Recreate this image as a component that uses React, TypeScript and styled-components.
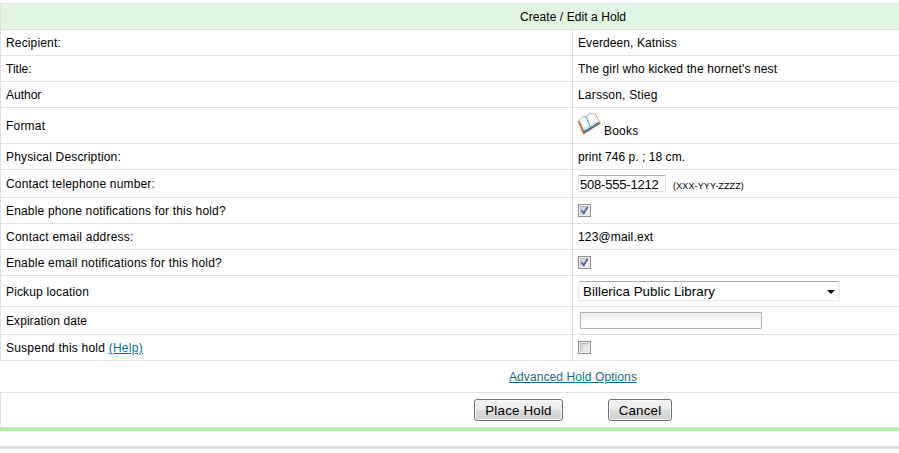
import React from "react";
import styled, { createGlobalStyle } from "styled-components";

const line = "#e0e0e0";

const GlobalStyle = createGlobalStyle`
  *, *::before, *::after { box-sizing: border-box; }
  body {
    margin: 0;
    background: #fff;
    color: #000;
    font: 12px/15px "Liberation Sans", Arial, sans-serif;
    overflow: hidden;
  }
`;

const Page = styled.main`
  width: 899px;
  height: 453px;
  padding-top: 3px;
  overflow: hidden;
`;

const Table = styled.section`
  border: 1px solid ${line};
  border-width: 1px 0 0 1px;
`;

const Title = styled.header`
  height: 26px;
  padding: 6px 0 0 519px;
  background: #e0f6e0;
  border-bottom: 1px solid ${line};
`;

const Row = styled.div<{ $height: number }>`
  display: grid;
  grid-template-columns: 571px 1fr;
  height: ${(p) => p.$height}px;
  border-bottom: 1px solid ${line};
`;

const Label = styled.div`
  display: flex;
  align-items: center;
  padding: 2px 0 0 5px;
  white-space: pre;
`;

const Value = styled.div`
  display: flex;
  align-items: center;
  padding-left: 5px;
  border-left: 1px solid ${line};
  white-space: pre;
`;

const Text = styled.span<{ $spacing?: number }>`
  letter-spacing: ${(p) => p.$spacing ?? 0}px;
`;

const ValueText = styled(Text)`
  padding-top: 2px;
`;

const Link = styled.a<{ $spacing?: number }>`
  color: #0b6ea8;
  letter-spacing: ${(p) => p.$spacing ?? 0}px;
  text-decoration: underline;
  cursor: pointer;
`;

const BookIcon = styled.svg`
  width: 24px;
  height: 24px;
  margin: 0 3px 3px -1px;
`;

const BookName = styled.span`
  padding-top: 11px;
  letter-spacing: 0.2px;
`;

const PhoneInput = styled.input`
  width: 88px;
  height: 17px;
  padding: 1px 1px 0;
  border: 1px solid #e2e6ec;
  border-top-color: #ababab;
  border-radius: 1px;
  background: #fff;
  color: #000;
  font: 13px "Liberation Sans", Arial, sans-serif;
  letter-spacing: -0.2px;
  outline: none;
`;

const Hint = styled.span`
  margin: 4px 0 0 7px;
  font-size: 9px;
  line-height: 12px;
  letter-spacing: 0.13px;
`;

const Check = styled.span`
  display: block;
  width: 13px;
  height: 13px;
  padding: 1px;
  border: 1px solid #8e8f8f;
  background: #f4f4f4;
`;

const CheckFace = styled.span`
  display: block;
  width: 9px;
  height: 9px;
  border: 1px solid #b8bcc2;
  border-right-color: #dfe1e4;
  border-bottom-color: #dfe1e4;
  background: linear-gradient(135deg, #cbcfd5, #f6f6f6);
`;

const Tick = styled.svg`
  display: block;
  width: 9px;
  height: 9px;
  margin: -1px;
  overflow: visible;
`;

const Select = styled.div`
  display: flex;
  align-items: center;
  justify-content: space-between;
  width: 262px;
  height: 20px;
  padding: 1px 4px 0;
  border: 1px solid #e2e6ec;
  border-top-color: #ababab;
  border-radius: 2px;
  font-size: 13.33px;
  letter-spacing: 0.03px;
`;

const Arrow = styled.svg`
  width: 8px;
  height: 4px;
`;

const DateInput = styled.input`
  width: 182px;
  height: 17px;
  margin-left: 2px;
  border: 1px solid #b2b2b2;
  background: linear-gradient(#ededed, #fff 9px);
  outline: none;
`;

const Advanced = styled.div`
  height: 31px;
  padding: 9px 0 0 509px;
`;

const Actions = styled.div`
  display: flex;
  gap: 45px;
  height: 36px;
  padding: 6px 0 0 473px;
  border: 1px solid ${line};
  border-right: 0;
`;

const Button = styled.button<{ $width: number }>`
  width: ${(p) => p.$width}px;
  height: 22px;
  padding: 0;
  border: 1px solid #707070;
  border-radius: 3px;
  background: linear-gradient(#f3f3f3 0%, #ebebeb 49%, #dddddd 50%, #cfcfcf 100%);
  box-shadow: inset 0 0 0 1px #fafafa;
  color: #000;
  font: 13.33px "Liberation Sans", Arial, sans-serif;
  letter-spacing: 0.2px;
`;

const GreenBar = styled.div`
  height: 3px;
  background: #aeeba1;
`;

const GrayBar = styled.div`
  height: 3px;
  margin-top: 15px;
  background: #e0e0e0;
`;

function Checkbox({ checked = false }: { checked?: boolean }) {
  return (
    <Check role="checkbox" aria-checked={checked}>
      <CheckFace>
        {checked && (
          <Tick viewBox="0 0 9 9">
            <path d="M1.5 4.2 3.7 7.2 7.6.9" fill="none" stroke="#4a5f9c" strokeWidth="1.8" />
          </Tick>
        )}
      </CheckFace>
    </Check>
  );
}

function Book() {
  return (
    <BookIcon viewBox="0 0 24 24">
      <path d="M.8 9.5 2.8 8 8 18.5 14 15.5 21.5 9.5 24 11.2 13.5 18 6.5 22.5Z" fill="#d4652c" />
      <path d="m17.5 1.6 1.2.2 4.6 9-1.3.1Z" fill="#d98455" />
      <path d="M6.8 20.2 13.2 16.2 22 11.2" fill="none" stroke="#2f809f" strokeWidth="1.7" />
      <path d="M2.3 8.2Q4.5 3.8 9 4.5L13.2 14.3Q8.6 14.2 7.2 19.2Z" fill="#f2f9fb" />
      <path d="M9 4.5Q11.5 1 17.2 1.4L22.2 10.2Q16.5 10.3 13.2 14.8Z" fill="#fbfdfe" />
      <path d="M2.3 8.2Q4.5 3.8 9 4.5Q11.5 1 17.2 1.4" fill="none" stroke="#8aabb8" strokeWidth=".8" />
      <path d="M7.2 19.2Q8.6 14.2 13.2 14.8Q16.5 10.3 22.2 10.2" fill="none" stroke="#78aebd" strokeWidth=".7" />
      <path d="m9 4.5 4.2 10" stroke="#4390a8" strokeWidth="1" />
    </BookIcon>
  );
}

const rows: { height: number; label: React.ReactNode; value: React.ReactNode }[] = [
  {
    height: 26,
    label: <Text $spacing={0.15}>Recipient:</Text>,
    value: <ValueText $spacing={0.09}>Everdeen, Katniss</ValueText>,
  },
  {
    height: 26,
    label: <Text>Title:</Text>,
    value: <ValueText $spacing={0.13}>The girl who kicked the hornet's nest</ValueText>,
  },
  {
    height: 26,
    label: <Text>Author</Text>,
    value: <ValueText $spacing={0.2}>Larsson, Stieg</ValueText>,
  },
  {
    height: 36,
    label: <Text $spacing={0.2}>Format</Text>,
    value: <><Book /><BookName>Books</BookName></>,
  },
  {
    height: 26,
    label: <Text $spacing={0.17}>Physical Description:</Text>,
    value: <ValueText $spacing={0.05}>print 746 p. ; 18 cm.</ValueText>,
  },
  {
    height: 28,
    label: <Text $spacing={0.17}>Contact telephone number:</Text>,
    value: <><PhoneInput defaultValue="508-555-1212" /><Hint>(XXX-YYY-ZZZZ)</Hint></>,
  },
  {
    height: 26,
    label: <Text $spacing={0.17}>Enable phone notifications for this hold?</Text>,
    value: <Checkbox checked />,
  },
  {
    height: 26,
    label: <Text $spacing={0.22}>Contact email address:</Text>,
    value: <ValueText $spacing={0.15}>123@mail.ext</ValueText>,
  },
  {
    height: 26,
    label: <Text $spacing={0.19}>Enable email notifications for this hold?</Text>,
    value: <Checkbox checked />,
  },
  {
    height: 31,
    label: <Text $spacing={0.15}>Pickup location</Text>,
    value: (
      <Select>
        Billerica Public Library
        <Arrow viewBox="0 0 8 4"><path d="M0 0h8L4 4Z" /></Arrow>
      </Select>
    ),
  },
  { height: 28, label: <Text $spacing={0.07}>Expiration date</Text>, value: <DateInput /> },
  {
    height: 26,
    label: <><Text $spacing={0.22}>Suspend this hold </Text><Link $spacing={0.25}>(Help)</Link></>,
    value: <Checkbox />,
  },
];

export default function App() {
  return (
    <Page>
      <GlobalStyle />
      <Table>
        <Title><Text $spacing={0.07}>Create / Edit a Hold</Text></Title>
        {rows.map((row, i) => (
          <Row key={i} $height={row.height}>
            <Label>{row.label}</Label>
            <Value>{row.value}</Value>
          </Row>
        ))}
      </Table>
      <Advanced><Link $spacing={0.09}>Advanced Hold Options</Link></Advanced>
      <Actions>
        <Button $width={89}>Place Hold</Button>
        <Button $width={64}>Cancel</Button>
      </Actions>
      <GreenBar />
      <GrayBar />
    </Page>
  );
}
